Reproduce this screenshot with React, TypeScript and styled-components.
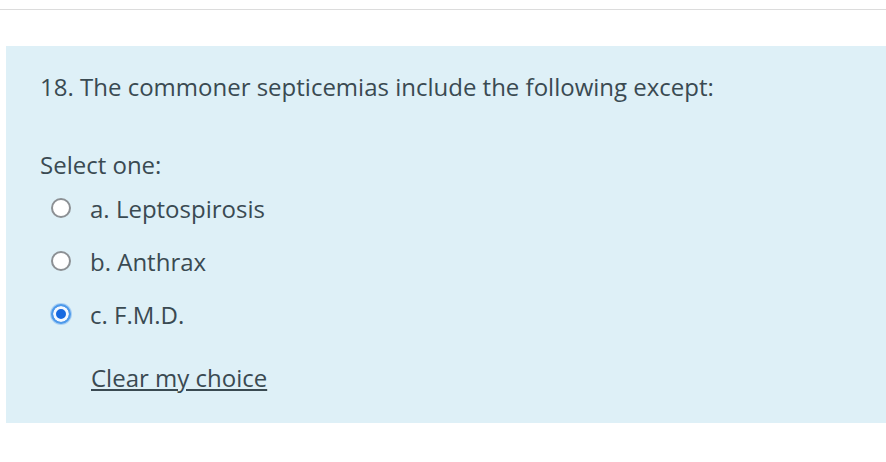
import styled, { createGlobalStyle } from 'styled-components';

const GlobalStyle = createGlobalStyle`
    html, body {
        margin: 0;
        padding: 0;
        background: #fff;
    }
    body {
        font-family: 'Open Sans', 'Noto Sans', sans-serif;
        color: #3a4a52;
    }
`;

const Page = styled.div`
    width: 886px;
    height: 462px;
    overflow: hidden;
    padding-top: 9px;
    box-sizing: border-box;
`;

const TopRule = styled.div`
    height: 1px;
    background: #dcdcdc;
    margin-bottom: 36px;
`;

const Formulation = styled.div`
    margin-left: 6px;
    background: #def0f7;
    height: 377px;
    box-sizing: border-box;
    padding: 26px 0 0 34px;
    font-size: 24px;
    line-height: 30px;
`;

const QuestionText = styled.p`
    margin: 0 0 48px;
`;

const Prompt = styled.div`
    margin-bottom: 14px;
`;

const Options = styled.div`
    display: flex;
    flex-direction: column;
    gap: 23px;
`;

const OptionRow = styled.label`
    display: flex;
    align-items: center;
    gap: 19px;
    padding-left: 11px;
`;

const Radio = styled.span<{ $checked?: boolean }>`
    width: 20px;
    height: 20px;
    margin-top: -3px;
    border-radius: 50%;
    box-sizing: border-box;
    border: 2px solid ${(p) => (p.$checked ? '#4d9aea' : '#8c9094')};
    background: ${(p) => (p.$checked ? '#1769e0' : '#fff')};
    box-shadow: ${(p) => (p.$checked ? 'inset 0 0 0 3px #f4f9ff, 0 0 0 1px #a9d0f5' : 'none')};
    flex-shrink: 0;
`;

const ClearLink = styled.a`
    display: inline-block;
    margin: 33px 0 0 51px;
    color: #3a4a52;
    text-decoration: underline;
`;

const options = [
    { id: 'a', label: 'a. Leptospirosis', checked: false },
    { id: 'b', label: 'b. Anthrax', checked: false },
    { id: 'c', label: 'c. F.M.D.', checked: true },
];

export default function App() {
    return (
        <>
            <GlobalStyle />
            <Page>
                <TopRule />
                <Formulation>
                    <QuestionText>18. The commoner septicemias include the following except:</QuestionText>
                    <Prompt>Select one:</Prompt>
                    <Options>
                        {options.map((o) => (
                            <OptionRow key={o.id}>
                                <Radio $checked={o.checked} />
                                {o.label}
                            </OptionRow>
                        ))}
                    </Options>
                    <ClearLink href="#">Clear my choice</ClearLink>
                </Formulation>
            </Page>
        </>
    );
}
